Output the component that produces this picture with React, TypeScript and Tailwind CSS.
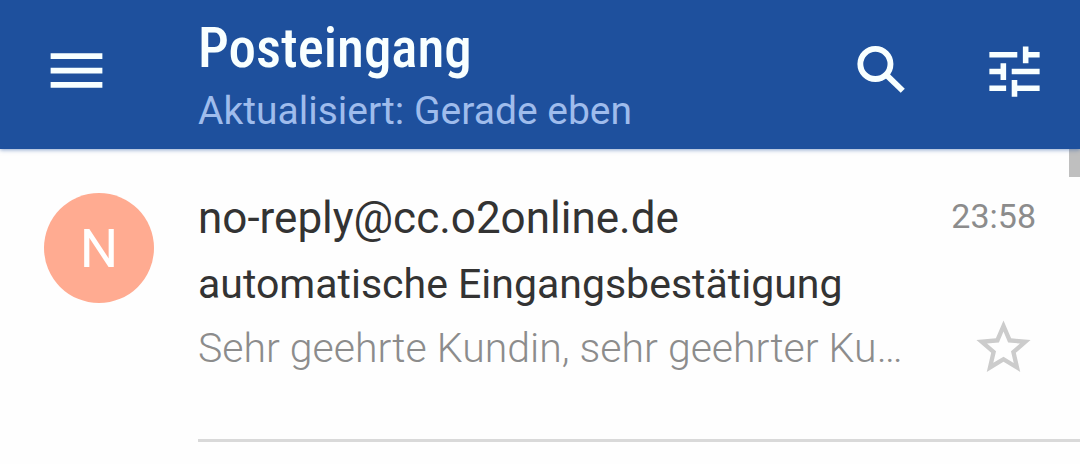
import React from 'react';
import { MdMenu, MdStarOutline, MdTune } from 'react-icons/md';

const SearchIcon = ({ className }: { className?: string }) => (
  <svg viewBox="0 0 24 24" fill="none" stroke="currentColor" strokeWidth="2.1" className={className} aria-hidden="true">
    <circle cx="9.1" cy="9.3" r="5.4" />
    <path d="M13.2 13.4l5.7 5.5" />
  </svg>
);

const Header = () => {
  return (
    <header className="relative z-10 flex items-start bg-[#1e509d] pt-4 pb-[7px] pl-[42px] pr-8 text-[#f8ffff] shadow-[0_1px_4px_rgba(30,80,157,0.5)]">
      <button aria-label="Menü" className="mt-5 mr-[87px]">
        <MdMenu className="size-[69px]" />
      </button>
      <div className="min-w-0 grow">
        <h1 className="font-['Roboto_Condensed',Roboto,sans-serif] text-[55px] leading-[64px] font-medium">Posteingang</h1>
        <p className="text-[39px] leading-[62px] text-[#9fbcec]">Aktualisiert: Gerade eben</p>
      </div>
      <div className="mt-[22px] flex shrink-0 gap-16">
        <button aria-label="Suchen">
          <SearchIcon className="size-[67px]" />
        </button>
        <button aria-label="Filter">
          <MdTune className="size-[67px]" />
        </button>
      </div>
    </header>
  );
};

const MailRow = () => {
  return (
    <li className="flex pl-11">
      <div className="mt-11 mr-11 flex size-[110px] shrink-0 items-center justify-center rounded-full bg-[#ffab91] text-[54px] text-white">
        N
      </div>
      <div className="flex min-w-0 grow border-b-[3px] border-[#d9d9d9] pt-[35px] pb-[59px]">
        <div className="min-w-0 grow text-[41px] leading-[64px] text-[#333333]">
          <h2 className="text-[44px] leading-[68px]">no-reply@cc.o2online.de</h2>
          <p>automatische Eingangsbestätigung</p>
          <p className="font-light text-[#8c8c8c]">Sehr geehrte Kundin, sehr geehrter Ku…</p>
        </div>
        <div className="mr-11 flex shrink-0 flex-col items-end justify-between">
          <time className="text-[34px] leading-[64px] text-[#8c8c8c]">23:58</time>
          <button aria-label="Markieren" className="text-[#cccccc]">
            <MdStarOutline className="size-[65px]" />
          </button>
        </div>
      </div>
    </li>
  );
};

export default function App() {
  return (
    <div className="min-h-screen bg-[#fefefe] font-[Roboto,sans-serif]">
      <Header />
      <main className="relative">
        <ul>
          <MailRow />
        </ul>
        <div className="absolute top-0 right-0 h-7 w-[11px] bg-[#bfbfbf]" />
      </main>
    </div>
  );
}
